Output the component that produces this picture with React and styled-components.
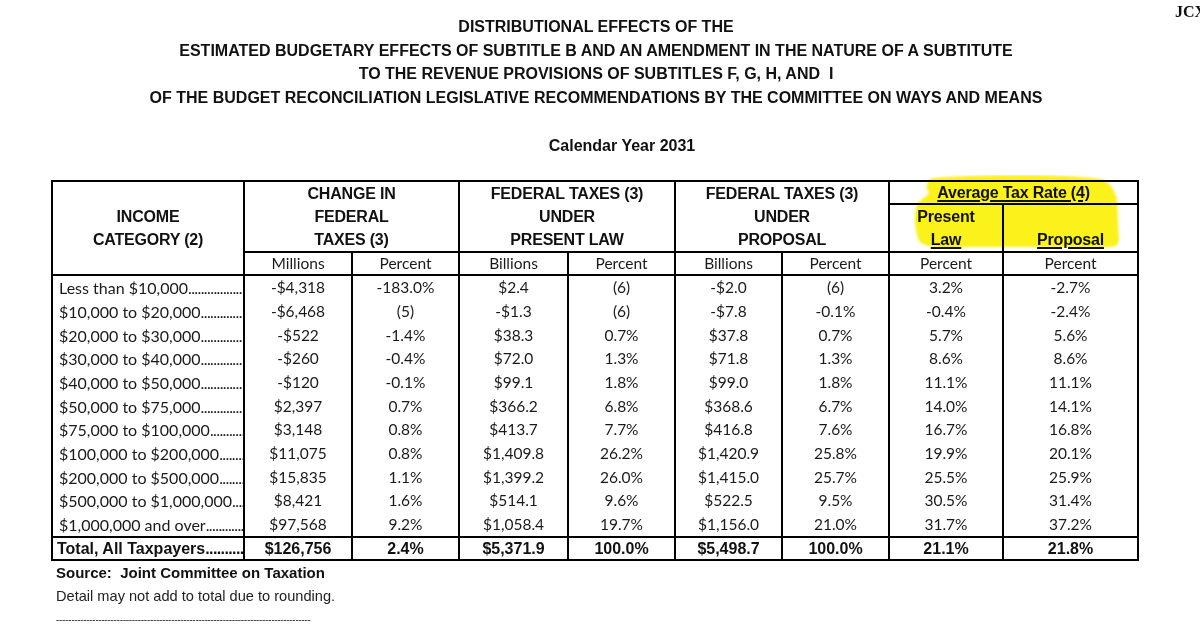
import React from "react";
import styled, { createGlobalStyle } from "styled-components";

const GlobalStyle = createGlobalStyle`
  html, body {
    margin: 0;
    padding: 0;
    background: #fff;
  }
  body {
    font-family: "Liberation Sans", Arial, sans-serif;
    color: #111;
  }
`;

const columns = [192, 108, 107, 109, 107, 107, 107, 114, 135];

const rows = [
  ["Less than $10,000", "-$4,318", "-183.0%", "$2.4", "(6)", "-$2.0", "(6)", "3.2%", "-2.7%"],
  ["$10,000 to $20,000", "-$6,468", "(5)", "-$1.3", "(6)", "-$7.8", "-0.1%", "-0.4%", "-2.4%"],
  ["$20,000 to $30,000", "-$522", "-1.4%", "$38.3", "0.7%", "$37.8", "0.7%", "5.7%", "5.6%"],
  ["$30,000 to $40,000", "-$260", "-0.4%", "$72.0", "1.3%", "$71.8", "1.3%", "8.6%", "8.6%"],
  ["$40,000 to $50,000", "-$120", "-0.1%", "$99.1", "1.8%", "$99.0", "1.8%", "11.1%", "11.1%"],
  ["$50,000 to $75,000", "$2,397", "0.7%", "$366.2", "6.8%", "$368.6", "6.7%", "14.0%", "14.1%"],
  ["$75,000 to $100,000", "$3,148", "0.8%", "$413.7", "7.7%", "$416.8", "7.6%", "16.7%", "16.8%"],
  ["$100,000 to $200,000", "$11,075", "0.8%", "$1,409.8", "26.2%", "$1,420.9", "25.8%", "19.9%", "20.1%"],
  ["$200,000 to $500,000", "$15,835", "1.1%", "$1,399.2", "26.0%", "$1,415.0", "25.7%", "25.5%", "25.9%"],
  ["$500,000 to $1,000,000", "$8,421", "1.6%", "$514.1", "9.6%", "$522.5", "9.5%", "30.5%", "31.4%"],
  ["$1,000,000 and over", "$97,568", "9.2%", "$1,058.4", "19.7%", "$1,156.0", "21.0%", "31.7%", "37.2%"],
];

const total = ["Total, All Taxpayers", "$126,756", "2.4%", "$5,371.9", "100.0%", "$5,498.7", "100.0%", "21.1%", "21.8%"];

const units = ["Millions", "Percent", "Billions", "Percent", "Billions", "Percent", "Percent", "Percent"];

const LEADER = ".".repeat(50);

const Page = styled.div`
  position: relative;
  width: 1200px;
  height: 633px;
  overflow: hidden;
  padding-top: 3px;
  box-sizing: border-box;
`;

const DocCode = styled.div`
  height: 12px;
  padding-left: 1175px;
  font-family: "Liberation Serif", "Times New Roman", serif;
  font-weight: bold;
  font-size: 16px;
  line-height: 18px;
  white-space: nowrap;
`;

const Title = styled.h1`
  margin: 0;
  padding-right: 8px;
  text-align: center;
  font-size: 16px;
  line-height: 23.7px;
  font-weight: bold;
`;

const TitleLine = styled.span`
  display: block;
  white-space: pre;
`;

const Subtitle = styled.h2`
  margin: 24px 0 0;
  padding-left: 44px;
  text-align: center;
  font-size: 16px;
  line-height: 24px;
  font-weight: bold;
`;

const TableWrap = styled.div`
  position: relative;
  width: 1088px;
  margin: 22px 0 0 51px;
`;

const Grid = styled.table`
  width: 1088px;
  table-layout: fixed;
  border-collapse: collapse;
  border: 2px solid #000;
`;

const HeadCell = styled.td`
  padding: 0;
  border: 2px solid #000;
  font-family: "Liberation Sans", Arial, sans-serif;
  font-weight: bold;
  font-size: 16px;
  line-height: ${(p) => p.$lh || 23}px;
  letter-spacing: -0.2px;
  text-align: center;
  vertical-align: ${(p) => p.$align || "middle"};
  height: ${(p) => p.$h || 21}px;
`;

const Under = styled.span`
  text-decoration: underline;
  text-decoration-thickness: 1.5px;
  text-underline-offset: 2px;
`;

const UnitCell = styled.td`
  padding: 0;
  height: 21px;
  border: 2px solid #000;
  font-family: Lato, "Open Sans", sans-serif;
  font-size: 15.5px;
  line-height: 19px;
  color: #1a1a1a;
  text-align: center;
  vertical-align: middle;
`;

const DataCell = styled.td`
  padding: 0;
  height: 23.7px;
  border-left: 2px solid #000;
  border-right: 2px solid #000;
  font-family: Lato, "Open Sans", sans-serif;
  font-size: 15.5px;
  line-height: 19px;
  color: #1a1a1a;
  text-align: center;
  vertical-align: middle;
`;

const TotalCell = styled.td`
  padding: 0;
  height: 21px;
  border: 2px solid #000;
  font-family: "Liberation Sans", Arial, sans-serif;
  font-weight: bold;
  font-size: 16px;
  line-height: 19px;
  color: #111;
  text-align: center;
  vertical-align: middle;
`;

const Label = styled.div`
  padding: 0 2px 0 ${(p) => p.$indent || 6}px;
  overflow: hidden;
  white-space: nowrap;
  text-align: left;
  font-size: ${(p) => p.$size || 16}px;
`;

const Dots = styled.span`
  letter-spacing: -0.6px;
`;

const Highlight = styled.svg`
  position: absolute;
  left: 854px;
  top: -5px;
  width: 226px;
  height: 76px;
  pointer-events: none;
  mix-blend-mode: multiply;
`;

const Notes = styled.div`
  padding-left: 56px;
`;

const Source = styled.div`
  margin-top: 1px;
  font-weight: bold;
  font-size: 15px;
  line-height: 22px;
  white-space: pre;
`;

const Detail = styled.div`
  font-size: 14.6px;
  line-height: 24px;
  color: #222;
`;

const Rule = styled.div`
  font-size: 10px;
  line-height: 24px;
  color: #333;
  letter-spacing: -0.3px;
  white-space: nowrap;
`;

export default function App() {
  return (
    <>
      <GlobalStyle />
      <Page>
        <DocCode>JCX-</DocCode>
        <Title>
          <TitleLine>DISTRIBUTIONAL EFFECTS OF THE</TitleLine>
          <TitleLine>ESTIMATED BUDGETARY EFFECTS OF SUBTITLE B AND AN AMENDMENT IN THE NATURE OF A SUBTITUTE</TitleLine>
          <TitleLine>TO THE REVENUE PROVISIONS OF SUBTITLES F, G, H, AND  I</TitleLine>
          <TitleLine>OF THE BUDGET RECONCILIATION LEGISLATIVE RECOMMENDATIONS BY THE COMMITTEE ON WAYS AND MEANS</TitleLine>
        </Title>
        <Subtitle>Calendar Year 2031</Subtitle>

        <TableWrap>
          <Grid>
            <colgroup>
              {columns.map((w, i) => (
                <col key={i} style={{ width: w }} />
              ))}
            </colgroup>
            <tbody>
              <tr>
                <HeadCell rowSpan={3}>
                  INCOME
                  <br />
                  CATEGORY (2)
                </HeadCell>
                <HeadCell colSpan={2} rowSpan={2}>
                  CHANGE IN
                  <br />
                  FEDERAL
                  <br />
                  TAXES (3)
                </HeadCell>
                <HeadCell colSpan={2} rowSpan={2}>
                  FEDERAL TAXES (3)
                  <br />
                  UNDER
                  <br />
                  PRESENT LAW
                </HeadCell>
                <HeadCell colSpan={2} rowSpan={2}>
                  FEDERAL TAXES (3)
                  <br />
                  UNDER
                  <br />
                  PROPOSAL
                </HeadCell>
                <HeadCell colSpan={2} $lh={21}>
                  <Under>Average Tax Rate (4)</Under>
                </HeadCell>
              </tr>
              <tr>
                <HeadCell $h={46} $align="bottom">
                  Present
                  <br />
                  <Under>Law</Under>
                </HeadCell>
                <HeadCell $h={46} $align="bottom">
                  <Under>Proposal</Under>
                </HeadCell>
              </tr>
              <tr>
                {units.map((u, i) => (
                  <UnitCell key={i}>{u}</UnitCell>
                ))}
              </tr>
              {rows.map((r, i) => (
                <tr key={i}>
                  {r.map((v, j) =>
                    j === 0 ? (
                      <DataCell key={j}>
                        <Label>
                          {v}
                          <Dots>{LEADER}</Dots>
                        </Label>
                      </DataCell>
                    ) : (
                      <DataCell key={j}>{v}</DataCell>
                    )
                  )}
                </tr>
              ))}
              <tr>
                {total.map((v, j) =>
                  j === 0 ? (
                    <TotalCell key={j}>
                      <Label $indent={4} $size={16}>
                        {v}
                        <Dots>{LEADER}</Dots>
                      </Label>
                    </TotalCell>
                  ) : (
                    <TotalCell key={j}>{v}</TotalCell>
                  )
                )}
              </tr>
            </tbody>
          </Grid>

          <Highlight viewBox="0 0 226 76">
            <defs>
              <filter id="soft" x="-10%" y="-10%" width="120%" height="120%">
                <feGaussianBlur stdDeviation="0.8" />
              </filter>
            </defs>
            <path
              d="M28 3 C80 -1 160 -1 196 4 C206 8 211 17 212 26 L214 66 C213 72 205 73 195 72 L62 72 C42 74 20 73 14 66 C9 53 9 40 12 30 C15 24 22 22 24 18 C20 12 22 5 28 3 Z"
              fill="#fbf21a"
              filter="url(#soft)"
            />
          </Highlight>
        </TableWrap>

        <Notes>
          <Source>Source:  Joint Committee on Taxation</Source>
          <Detail>Detail may not add to total due to rounding.</Detail>
          <Rule>{"-".repeat(84)}</Rule>
        </Notes>
      </Page>
    </>
  );
}
